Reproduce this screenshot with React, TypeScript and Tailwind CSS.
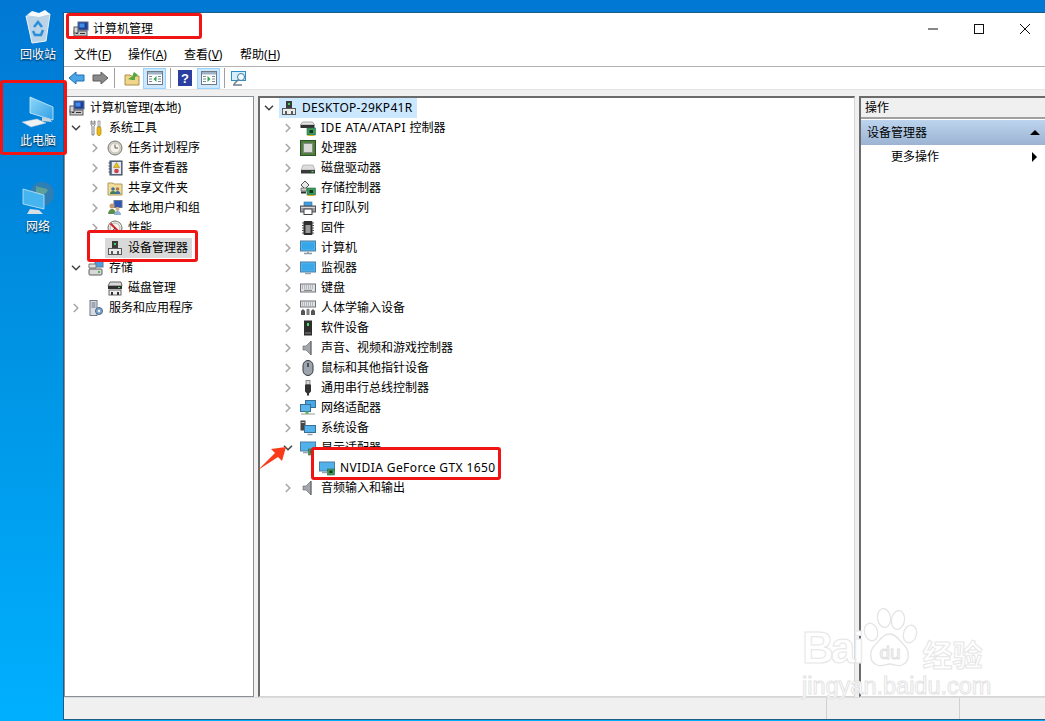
import type { ReactNode } from "react"

type Node = {
  label: ReactNode
  icon: ReactNode
  state?: "open" | "closed"
  hl?: "gray" | "blue"
  lift?: boolean
  children?: Node[]
}

function Ico({ children }: { children: ReactNode }) {
  return (
    <svg viewBox="0 0 16 16" className="w-4 h-4 shrink-0 block">
      {children}
    </svg>
  )
}

// small computer-ish icons, 16x16
const Mgmt = (
  <Ico>
    <rect x="5" y="1" width="10" height="8" fill="#1f3f9a" stroke="#5f6f88" />
    <rect x="6.500" y="2.500" width="5" height="4" fill="#3f8fe8" />
    <path d="M7 9h6l1 2H6z" fill="#8a94a6" />
    <rect x="1" y="10" width="13" height="5" fill="#c9c9c9" stroke="#55585e" />
    <rect x="1" y="6" width="4" height="6" fill="#d6d6d6" stroke="#55585e" />
    <path d="M3 12.500h2M7 12.500h5" stroke="#2f2f2f" />
  </Ico>
)
const Tools = (
  <Ico>
    <path d="M3 1v4l1 1v9h2V6l1-1V1L6 1v3H4V1z" fill="#f2f2f2" stroke="#6b6b6b" strokeWidth=".8" />
    <rect x="10" y="1" width="2" height="6" fill="#e8e8e8" stroke="#707070" strokeWidth=".6" />
    <path d="M9.500 7h3l.5 2v5l-1 1.500h-2L9 14V9z" fill="#f0b90b" stroke="#a87a00" strokeWidth=".6" />
  </Ico>
)
const Clock = (
  <Ico>
    <circle cx="8" cy="8" r="7" fill="#d9d4c4" stroke="#777" />
    <circle cx="8" cy="8" r="5" fill="#f6f4ea" stroke="#a8a8a8" strokeWidth=".6" />
    <path d="M8 4.500V8h3" fill="none" stroke="#5a5a5a" strokeWidth="1" />
  </Ico>
)
const EventLog = (
  <Ico>
    <rect x="3" y="1" width="12" height="14" fill="#6f7f99" stroke="#3c4a63" />
    <rect x="5" y="2" width="9" height="12" fill="#e5e8ee" />
    <path d="M1.500 3h2M1.500 6h2M1.500 9h2M1.500 12h2" stroke="#3c4a63" />
    <path d="M9.500 2.500l3 5h-6z" fill="#f2c40f" stroke="#9a7a00" strokeWidth=".5" />
    <circle cx="9.500" cy="11" r="2.300" fill="#c9434b" />
  </Ico>
)
const SharedFolder = (
  <Ico>
    <path d="M1 3h5l1 1h8v11H1z" fill="#f1dc9a" stroke="#b09a5c" />
    <circle cx="6" cy="9" r="1.800" fill="#3f6f9f" />
    <path d="M3 14c0-2 1-3 3-3s3 1 3 3z" fill="#3f7f5f" />
    <circle cx="10.500" cy="9" r="1.800" fill="#a87a50" />
    <path d="M8 14c0-2 1-3 2.500-3s3 1 3 3z" fill="#3f6f9f" />
  </Ico>
)
const Users = (
  <Ico>
    <rect x="7" y="0.500" width="8" height="7" fill="#2f55b5" stroke="#6b7a90" />
    <circle cx="5" cy="6" r="2.500" fill="#c79a6b" />
    <path d="M1 14c0-3 2-5 4-5s4 2 4 5z" fill="#5b8f4b" />
    <circle cx="10.500" cy="9" r="2" fill="#d6ad82" />
    <path d="M7 15c0-2.500 1.500-4 3.500-4s3.500 1.500 3.500 4z" fill="#8fb0d8" />
  </Ico>
)
const Perf = (
  <Ico>
    <circle cx="8" cy="8" r="7" fill="#f4f2ea" stroke="#6f6f6f" />
    <circle cx="8" cy="8" r="5" fill="none" stroke="#9aa09a" strokeWidth=".7" />
    <path d="M3.500 3.500l9 9" stroke="#d8232a" strokeWidth="2" />
    <path d="M8 8l-2.500 3" stroke="#333" />
  </Ico>
)
const DevMgr = (
  <Ico>
    <rect x="5" y="1" width="6" height="7" fill="#3b3b3b" />
    <rect x="7" y="3" width="2" height="2" fill="#3cd65a" />
    <rect x="1.500" y="8.500" width="13" height="6" fill="#ececec" stroke="#5a5a5a" />
    <path d="M4 14.500V11h2v3.500M10 14.500V11h2v3.500" fill="#5a5a5a" />
  </Ico>
)
const Storage = (
  <Ico>
    <rect x="7" y="1" width="8" height="6" fill="#4f9fe0" stroke="#5a7a98" />
    <path d="M1 4h7v4H1z" fill="#e0e0e0" stroke="#777" />
    <rect x="1" y="9" width="13" height="6" rx="1" fill="#d8d8d8" stroke="#5d5d5d" />
    <rect x="10" y="11" width="2" height="2" fill="#4fb84f" />
  </Ico>
)
const DiskMgmt = (
  <Ico>
    <path d="M3 2h11l1 4H1z" fill="#d9d9d9" stroke="#666" />
    <rect x="1" y="6" width="14" height="3" fill="#2f2f2f" />
    <rect x="11" y="7" width="2" height="1" fill="#4fe05f" />
    <rect x="2" y="10" width="12" height="5" fill="#efefef" stroke="#666" />
    <path d="M5 15v-3M11 15v-3" stroke="#333" strokeWidth="2" />
  </Ico>
)
const Services = (
  <Ico>
    <rect x="2" y="0.500" width="7" height="15" fill="#d9dde3" stroke="#727a86" />
    <path d="M3.500 3h4M3.500 5h4M3.500 7h4" stroke="#6a7380" />
    <circle cx="11" cy="11" r="3.500" fill="#7fa4c9" stroke="#4a6a8c" />
    <circle cx="11" cy="11" r="1.200" fill="#f0f4f8" />
  </Ico>
)
const Board = (
  <g>
    <rect x="7" y="8" width="8.500" height="7" fill="#3c9a5f" stroke="#2a6a42" strokeWidth=".6" />
    <rect x="9.500" y="10" width="3.500" height="3" fill="#17351f" />
    <path d="M8 15.500h6" stroke="#e0b020" />
  </g>
)
const Ide = (
  <Ico>
    <path d="M2.500 2h10l2 3h-14z" fill="#e6e6e6" stroke="#888" strokeWidth=".7" />
    <rect x="0.500" y="5" width="14" height="3" fill="#333" />
    {Board}
  </Ico>
)
const Cpu = (
  <Ico>
    <rect x="0.500" y="0.500" width="15" height="15" fill="#4e7f3d" stroke="#2e4f22" />
    <rect x="3.500" y="3.500" width="9" height="9" fill="#d9d9d9" stroke="#8a8a8a" />
  </Ico>
)
const Disk = (
  <Ico>
    <path d="M3 5h10l2 5H1z" fill="#dcdcdc" stroke="#a0a0a0" strokeWidth=".6" />
    <rect x="1" y="10" width="14" height="3.500" fill="#3a3a3a" />
    <rect x="11.500" y="11" width="2" height="1.200" fill="#4fe05f" />
  </Ico>
)
const StorageCtl = (
  <Ico>
    <path d="M5 1l4 4-4 4-4-4z" fill="#e9e9e9" stroke="#555" />
    <path d="M1 8h6v3H1z" fill="#cfcfcf" stroke="#555" strokeWidth=".7" />
    <path d="M1 12.500h5" stroke="#333" strokeWidth="2" />
    {Board}
  </Ico>
)
const Printer = (
  <Ico>
    <rect x="4" y="2" width="8" height="4" fill="#3f9fe0" stroke="#2f6f9f" strokeWidth=".6" />
    <rect x="0.500" y="6" width="15" height="6" fill="#9a9ea5" stroke="#4f5359" />
    <rect x="4" y="9" width="8" height="5.500" fill="#fff" stroke="#444" />
    <path d="M1 7.500h14" stroke="#d8dade" />
  </Ico>
)
const Chip = (
  <Ico>
    <rect x="3.500" y="1" width="9" height="14" rx="1" fill="#2e2e2e" />
    <rect x="5.500" y="5" width="5" height="8" fill="#9a9a9a" />
    <path d="M2 3h2M2 5.500h2M2 8h2M2 10.500h2M2 13h2M12 3h2M12 5.500h2M12 8h2M12 10.500h2M12 13h2" stroke="#555" />
  </Ico>
)
const Pc = (
  <Ico>
    <rect x="0.500" y="1" width="15" height="10" fill="#55b5ec" stroke="#4a7fa5" />
    <rect x="2" y="2.500" width="12" height="7" fill="#35a7e8" />
    <path d="M7 11h2v2H7z" fill="#aab2ba" />
    <path d="M4 13.500h8" stroke="#8f98a1" strokeWidth="1.500" />
  </Ico>
)
const Monitor = (
  <Ico>
    <rect x="0.500" y="2" width="15" height="10" fill="#55b5ec" stroke="#4a7fa5" />
    <rect x="2" y="3.500" width="12" height="7" fill="#3ba9e9" />
    <path d="M5 13.500h6" stroke="#9aa2aa" strokeWidth="1.500" />
  </Ico>
)
const Keyboard = (
  <Ico>
    <rect x="0.500" y="4" width="15" height="8" fill="#dfe1e4" stroke="#6f747b" />
    <path d="M2 6h12M2 8h12" stroke="#8b9097" strokeDasharray="1 1" />
    <path d="M4 10.300h8" stroke="#777" />
  </Ico>
)
const Hid = (
  <Ico>
    <rect x="0.500" y="1" width="15" height="6" fill="#dfe1e4" stroke="#6f747b" />
    <path d="M2 3h12M2 5h12" stroke="#8b9097" strokeDasharray="1 1" />
    <path d="M1 15v-4l2-2 2 2v4zM11 15v-4l2-2 2 2v4z" fill="#555" />
    <path d="M6.500 15V9.500l1.500-1 1.500 1V15z" fill="#7d7d7d" />
  </Ico>
)
const Tower = (
  <Ico>
    <rect x="4" y="0.500" width="8" height="15" fill="#2e2e2e" />
    <rect x="7" y="3" width="2" height="3" fill="#4fe05f" />
    <path d="M5 13h6" stroke="#888" />
  </Ico>
)
const Speaker = (
  <Ico>
    <path d="M3 6h3l5-5v14l-5-5H3z" fill="#a3a6aa" stroke="#6d7075" strokeWidth=".7" />
    <path d="M11 1v14" stroke="#5f6267" />
  </Ico>
)
const Mouse = (
  <Ico>
    <rect x="3" y="0.500" width="10" height="15" rx="5" fill="#9ca4ad" stroke="#33373c" />
    <rect x="7" y="3" width="2" height="4" fill="#4d5157" />
  </Ico>
)
const Usb = (
  <Ico>
    <rect x="6" y="0.500" width="4" height="4" fill="#d8d8d8" stroke="#666" strokeWidth=".7" />
    <path d="M5 4.500h6v7l-2 2v2H7v-2l-2-2z" fill="#333" />
  </Ico>
)
const Net = (
  <Ico>
    <rect x="5.500" y="0.500" width="10" height="7" fill="#46a8e6" stroke="#3a6f95" />
    <rect x="0.500" y="4.500" width="10" height="7" fill="#5ab5ec" stroke="#3a6f95" />
    <path d="M1 14h14" stroke="#bbb" strokeWidth="1.500" />
    <path d="M5.500 11.500h3v2.500h-3z" fill="#58b858" />
  </Ico>
)
const Sys = (
  <Ico>
    <rect x="0.500" y="0.500" width="5" height="10" fill="#444" />
    <rect x="1.500" y="2" width="3" height="1" fill="#cfcfcf" />
    <rect x="4.500" y="5.500" width="11" height="7" fill="#52b1ea" stroke="#3a6f95" />
    <path d="M7.500 14.500h5" stroke="#9aa2aa" strokeWidth="1.500" />
  </Ico>
)
const Display = (
  <Ico>
    <rect x="0.500" y="2" width="15" height="9" fill="#52b1ea" stroke="#4a7fa5" />
    <path d="M3 12.500h5" stroke="#9aa2aa" strokeWidth="1.500" />
    <rect x="8.500" y="9" width="7" height="6" fill="#3c9a5f" stroke="#2a6a42" strokeWidth=".6" />
    <rect x="10.500" y="10.500" width="3" height="2.500" fill="#17351f" />
  </Ico>
)

const leftTree: Node[] = [
  {
    label: "系统工具",
    icon: Tools,
    state: "open",
    children: [
      { label: "任务计划程序", icon: Clock, state: "closed" },
      { label: "事件查看器", icon: EventLog, state: "closed" },
      { label: "共享文件夹", icon: SharedFolder, state: "closed" },
      { label: "本地用户和组", icon: Users, state: "closed" },
      { label: "性能", icon: Perf, state: "closed" },
      { label: "设备管理器", icon: DevMgr, hl: "gray", lift: true },
    ],
  },
  { label: "存储", icon: Storage, state: "open", children: [{ label: "磁盘管理", icon: DiskMgmt }] },
  { label: "服务和应用程序", icon: Services, state: "closed" },
]

const devices: Node = {
  label: <span className="tracking-[.3px]">DESKTOP-29KP41R</span>,
  icon: DevMgr,
  state: "open",
  hl: "blue",
  children: [
    {
      label: (
        <span>
          <span className="tracking-[.45px]">IDE ATA/ATAPI </span>控制器
        </span>
      ),
      icon: Ide,
      state: "closed",
    },
    { label: "处理器", icon: Cpu, state: "closed" },
    { label: "磁盘驱动器", icon: Disk, state: "closed" },
    { label: "存储控制器", icon: StorageCtl, state: "closed" },
    { label: "打印队列", icon: Printer, state: "closed" },
    { label: "固件", icon: Chip, state: "closed" },
    { label: "计算机", icon: Pc, state: "closed" },
    { label: "监视器", icon: Monitor, state: "closed" },
    { label: "键盘", icon: Keyboard, state: "closed" },
    { label: "人体学输入设备", icon: Hid, state: "closed" },
    { label: "软件设备", icon: Tower, state: "closed" },
    { label: "声音、视频和游戏控制器", icon: Speaker, state: "closed" },
    { label: "鼠标和其他指针设备", icon: Mouse, state: "closed" },
    { label: "通用串行总线控制器", icon: Usb, state: "closed" },
    { label: "网络适配器", icon: Net, state: "closed" },
    { label: "系统设备", icon: Sys, state: "closed" },
    {
      label: "显示适配器",
      icon: Display,
      state: "open",
      children: [
        {
          label: <span className="tracking-[.4px]">NVIDIA GeForce GTX 1650</span>,
          icon: Display,
          lift: true,
        },
      ],
    },
    { label: "音频输入和输出", icon: Speaker, state: "closed" },
  ],
}

function Chevron({ state }: { state?: "open" | "closed" }) {
  if (state === "open") {
    return (
      <svg viewBox="0 0 10 6" className="w-[10px] h-[6px]">
        <path d="M1 .8l4 4 4-4" fill="none" stroke="#404040" strokeWidth="1.500" />
      </svg>
    )
  }
  if (state === "closed") {
    return (
      <svg viewBox="0 0 6 10" className="w-[6px] h-[10px]">
        <path d="M.8 1l4 4-4 4" fill="none" stroke="#a6a6a6" strokeWidth="1.500" />
      </svg>
    )
  }
  return null
}

function TreeItem({ node }: { node: Node }) {
  return (
    <div>
      <div className={node.lift ? "flex items-center h-[20px] relative z-20" : "flex items-center h-[20px]"}>
        <span className="w-[19px] shrink-0 flex justify-center pr-[5px]">
          <Chevron state={node.state} />
        </span>
        <span
          className={
            "flex items-center gap-[5px] -ml-[2px] pl-[2px] pr-[4px] h-full whitespace-nowrap " +
            (node.hl === "gray" ? "bg-[#d9d9d9]" : node.hl === "blue" ? "bg-[#cce8ff]" : "")
          }
        >
          {node.icon}
          {node.label}
        </span>
      </div>
      {node.children && (
        <div className="pl-[19px]">
          {node.children.map((c, i) => (
            <TreeItem key={i} node={c} />
          ))}
        </div>
      )}
    </div>
  )
}

function DesktopIcon({ icon, label, className }: { icon: ReactNode; label: string; className: string }) {
  return (
    <div className={"flex flex-col items-center w-[52px] ml-[12px] " + className}>
      {icon}
      <span className="text-white text-[12px] leading-[16px] mt-[2px] [text-shadow:0_1px_2px_rgba(0,0,0,0.85)]">
        {label}
      </span>
    </div>
  )
}

function MenuItem({ text, k, className }: { text: string; k: string; className: string }) {
  return (
    <span className={"shrink-0 " + className}>
      {text}(<span className="underline">{k}</span>)
    </span>
  )
}

function ToolSep() {
  return <span className="block w-px h-[20px] bg-[#a0a0a0]" />
}

function ToggleGlyph({ dir }: { dir: "left" | "right" }) {
  return (
    <svg viewBox="0 0 16 16" className="w-4 h-4">
      <rect x="0.500" y="1.500" width="15" height="13" fill="#fff" stroke="#6f7a86" />
      <rect x="1" y="2" width="14" height="2.500" fill="#9fb2c6" />
      <path d="M2 6.500h3M2 9h3M2 11.500h3M11 6.500h3M11 9h3M11 11.500h3" stroke="#7c8894" />
      <path d={dir === "left" ? "M9.500 6v6l-3-3z" : "M6.500 6v6l3-3z"} fill="#2fa84f" />
    </svg>
  )
}

export default function App() {
  return (
    <div className="relative w-[1045px] h-[721px] overflow-hidden flex bg-gradient-to-b from-[#0078d4] via-[#0094e4] to-[#00b0ff] [font-family:'Noto_Sans','Noto_Sans_CJK_SC',sans-serif] text-[12px] text-black">
      {/* desktop icons */}
      <div className="w-[63px] shrink-0">
        <DesktopIcon
          className="mt-[9px]"
          label="回收站"
          icon={
            <svg viewBox="0 0 30 36" className="w-[30px] h-[36px]">
              <path d="M3 7l24-2-4 27-14 2z" fill="#cfdde8" fillOpacity=".9" stroke="#eef5fa" />
              <path d="M4 6l5-4 7 2 6-3 5 4-11 3z" fill="#f8fafb" />
              <path d="M11 18l4-5 4 5M20 21l-2 5h-6l-2-4" fill="none" stroke="#2a8fd8" strokeWidth="2.500" />
            </svg>
          }
        />
        <DesktopIcon
          className="mt-[32px]"
          label="此电脑"
          icon={
            <svg viewBox="0 0 36 36" className="w-[36px] h-[36px]">
              <defs>
                <linearGradient id="pcScreen" x1="0" y1="0" x2="1" y2="1">
                  <stop offset="0" stopColor="#8fd8f7" />
                  <stop offset="1" stopColor="#2f9fe6" />
                </linearGradient>
              </defs>
              <path d="M10 2l23 10v13l-23-7z" fill="url(#pcScreen)" stroke="#d5eefa" strokeWidth=".8" />
              <path d="M22 22l8 2 2 3-10-1z" fill="#c8d4dc" />
              <path d="M2 27l15-3 9 4-15 4z" fill="#eef2f5" stroke="#b9c4cc" strokeWidth=".5" />
            </svg>
          }
        />
        <DesktopIcon
          className="mt-[32px]"
          label="网络"
          icon={
            <svg viewBox="0 0 32 36" className="w-[32px] h-[36px]">
              <circle cx="20" cy="13" r="12" fill="#2f7fb5" />
              <path d="M14 5c4 2 8 1 12 4-3 6-8 6-12 3z" fill="#6fae8a" fillOpacity=".7" />
              <path d="M1 8l21 6v14L1 23z" fill="#46b4ee" stroke="#c7e6f6" strokeWidth=".8" />
              <path d="M8 28l9 1 4 4H5z" fill="#d6dfe5" />
            </svg>
          }
        />
      </div>

      {/* window */}
      <div className="flex-1 min-w-0 pt-[12px] pb-px flex flex-col">
        <div className="flex-1 min-h-0 flex flex-col bg-[#f0f0f0] border-l border-t border-b border-[#1c5c85]">
          <div className="h-[31px] shrink-0 bg-white flex items-center pl-[9px] gap-[4px]">
            {Mgmt}
            <span>计算机管理</span>
            <div className="ml-auto -mr-[3px] flex items-center">
              <span className="w-[46px] flex justify-center">
                <svg viewBox="0 0 10 10" className="w-[10px] h-[10px]">
                  <path d="M0 5h10" stroke="#111" />
                </svg>
              </span>
              <span className="w-[46px] flex justify-center">
                <svg viewBox="0 0 10 10" className="w-[10px] h-[10px]">
                  <rect x=".5" y=".5" width="9" height="9" fill="none" stroke="#111" />
                </svg>
              </span>
              <span className="w-[46px] flex justify-center">
                <svg viewBox="0 0 10 10" className="w-[10px] h-[10px]">
                  <path d="M0 0l10 10M10 0L0 10" stroke="#111" />
                </svg>
              </span>
            </div>
          </div>

          <div className="h-[23px] shrink-0 bg-white border-b border-[#b4b4b4] flex items-center pl-[10px]">
            <MenuItem text="文件" k="F" className="w-[54px]" />
            <MenuItem text="操作" k="A" className="w-[56px]" />
            <MenuItem text="查看" k="V" className="w-[56px]" />
            <MenuItem text="帮助" k="H" className="w-[56px]" />
          </div>

          <div className="h-[23px] shrink-0 bg-white border-b border-[#e3e3e3] flex items-center pl-[4px]">
            <svg viewBox="0 0 17 14" className="w-[17px] h-[14px]">
              <path d="M1 7l7-6v3h8v6H8v3z" fill="#4ba6e8" stroke="#1f6fb5" />
            </svg>
            <svg viewBox="0 0 17 14" className="w-[17px] h-[14px] ml-[7px]">
              <path d="M16 7L9 1v3H1v6h8v3z" fill="#8a8a8a" stroke="#5c5c5c" />
            </svg>
            <span className="ml-[5px]">
              <ToolSep />
            </span>
            <svg viewBox="0 0 16 16" className="w-4 h-4 ml-[9px]">
              <path d="M1 5h5l1 1h8v9H1z" fill="#f0d68a" stroke="#a88f4a" />
              <path d="M4 9l5-3V4l1-2 4 3-3 2v3H8z" fill="#53a83f" />
            </svg>
            <span className="ml-[3px] w-[23px] h-[21px] bg-[#cce8ff] border border-[#99d1ff] flex items-center justify-center">
              <ToggleGlyph dir="left" />
            </span>
            <span className="ml-[4px]">
              <ToolSep />
            </span>
            <svg viewBox="0 0 14 16" className="w-[14px] h-4 ml-[7px]">
              <rect width="14" height="16" fill="#2a3f9f" />
              <text x="7" y="13" textAnchor="middle" fontSize="13" fontWeight="700" fill="#fff" fontFamily="Liberation Sans">
                ?
              </text>
            </svg>
            <span className="ml-[5px] w-[23px] h-[21px] bg-[#cce8ff] border border-[#99d1ff] flex items-center justify-center">
              <ToggleGlyph dir="right" />
            </span>
            <span className="ml-[4px]">
              <ToolSep />
            </span>
            <svg viewBox="0 0 17 16" className="w-[17px] h-4 ml-[6px]">
              <rect x=".5" y="1.500" width="14" height="9" fill="#d6effb" stroke="#2d8fc4" />
              <circle cx="10" cy="7" r="3.500" fill="#f2fbff" stroke="#3a7fa5" />
              <path d="M7.500 9.500L3 14M2 15h9" stroke="#6f7f8a" strokeWidth="1.500" />
            </svg>
          </div>

          <div className="flex-1 min-h-0 mt-[6px] flex gap-[4px]">
            <div className="w-[190px] shrink-0 bg-white border border-[#8a8f95] pt-px pl-[4px]">
              <div className="flex items-center h-[20px] gap-[5px]">
                {Mgmt}
                计算机管理(本地)
              </div>
              {leftTree.map((n, i) => (
                <TreeItem key={i} node={n} />
              ))}
            </div>

            <div className="w-[597px] shrink-0 bg-white border-l-2 border-t-2 border-l-[#6b6b6b] border-t-[#6b6b6b] border-r border-b border-r-[#d5d5d5] border-b-[#d5d5d5] pl-[2px]">
              <TreeItem node={devices} />
            </div>

            <div className="flex-1 min-w-0 bg-white border-l-2 border-t-2 border-l-[#6b6b6b] border-t-[#6b6b6b] border-b border-b-[#d5d5d5]">
              <div className="h-[21px] bg-[#f0f0f0] border-b-2 border-[#a0a0a0] flex items-center pl-[4px] pt-px">操作</div>
              <div className="h-[25px] mt-px bg-gradient-to-b from-[#bcd4ee] to-[#9cb4d2] flex items-center pl-[6px] pr-[5px] justify-between">
                设备管理器
                <span className="w-0 h-0 border-x-[5px] border-x-transparent border-b-[5px] border-b-black" />
              </div>
              <div className="h-[24px] flex items-center pl-[30px] pr-[8px] justify-between">
                更多操作
                <span className="w-0 h-0 border-y-[5px] border-y-transparent border-l-[5px] border-l-black" />
              </div>
            </div>
          </div>

          <div className="h-[22px] shrink-0 border-t border-[#dcdcdc] flex">
            <span className="w-[763px] border-r border-[#d0d0d0]" />
            <span className="w-[133px] border-r border-[#d0d0d0]" />
          </div>
        </div>
      </div>

      {/* red annotations */}
      <div className="absolute left-[66px] top-[13px] w-[136px] h-[26px] border-[3px] border-[#f01414] rounded-[3px]" />
      <div className="absolute left-0 top-[80px] w-[67px] h-[75px] border-[3px] border-[#f01414] rounded-[3px]" />
      <div className="absolute z-10 left-[87px] top-[230px] w-[111px] h-[32px] bg-white border-[3px] border-[#f01414] rounded-[3px]" />
      <div className="absolute z-10 left-[311px] top-[447px] w-[190px] h-[33px] bg-white border-[3px] border-[#f01414] rounded-[3px]" />
      <svg viewBox="0 0 34 28" className="absolute z-30 left-[256px] top-[445px] w-[34px] h-[28px]">
        <polygon points="2,25 19,8 15,4 30,2 26,16 22,12" fill="#fa3a1a" />
      </svg>

      {/* watermark */}
      <div className="absolute z-30 left-[802px] top-[608px] w-[190px] text-white pointer-events-none [font-family:'Liberation_Sans',sans-serif]">
        <div className="flex items-end h-[62px]">
          <span className="text-[44px] leading-[44px] font-bold tracking-[-3px] [-webkit-text-stroke:1px_#e6e6e6]">Bai</span>
          <svg viewBox="0 0 55 62" className="w-[55px] h-[62px] ml-[2px] shrink-0">
            <g fill="#fff" stroke="#e4e4e4" strokeWidth="1.300">
              <ellipse cx="8" cy="24" rx="6.500" ry="9" transform="rotate(-15 8 24)" />
              <ellipse cx="21" cy="10" rx="6.500" ry="9.500" transform="rotate(-8 21 10)" />
              <ellipse cx="35" cy="12" rx="6.500" ry="9.500" transform="rotate(10 35 12)" />
              <ellipse cx="47" cy="26" rx="6.500" ry="9" transform="rotate(15 47 26)" />
              <path d="M27 26c6 0 9 6 14 11 6 6 6 17-2 20-5 2-8-1-12-1s-8 3-13 1C6 54 6 43 12 37c5-5 8-11 15-11z" />
            </g>
            <text x="27" y="51" textAnchor="middle" fontSize="19" fill="#fff" stroke="#e0e0e0" fontFamily="Liberation Sans">
              du
            </text>
          </svg>
          <span className="text-[30px] leading-[36px] font-bold mb-[-1px] ml-[4px] whitespace-nowrap [font-family:'Noto_Sans_CJK_SC',sans-serif] [-webkit-text-stroke:1px_#e6e6e6]">
            经验
          </span>
        </div>
        <div className="mt-[3px] text-[23.5px] leading-[27px] whitespace-nowrap [-webkit-text-stroke:1px_#e4e4e4]">
          jingyan.baidu.com
        </div>
      </div>
    </div>
  )
}
